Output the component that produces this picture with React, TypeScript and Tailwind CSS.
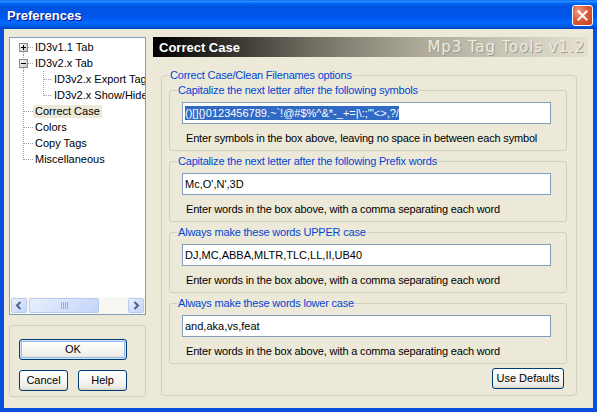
import React from "react";

type Kind = "first" | "exp" | "child" | "childLast" | "mid" | "last";

const dot = {
  stroke: "#A0A0A0",
  strokeDasharray: "1 1",
  shapeRendering: "crispEdges" as const,
};

function Expander({ minus, id }: { minus?: boolean; id: string }) {
  return (
    <>
      <defs>
        <linearGradient id={id} x1="0" y1="0" x2="1" y2="1">
          <stop offset="0" stopColor="#FFFFFF" />
          <stop offset="1" stopColor="#C6C3B3" />
        </linearGradient>
      </defs>
      <rect x={9.5} y={4.5} width={8} height={8} fill={`url(#${id})`} stroke="#7B8C9E" shapeRendering="crispEdges" />
      <line x1={11} y1={8.5} x2={16} y2={8.5} stroke="#000" shapeRendering="crispEdges" />
      {!minus && <line x1={13.5} y1={6} x2={13.5} y2={11} stroke="#000" shapeRendering="crispEdges" />}
    </>
  );
}

function Conn({ kind, id }: { kind: Kind; id: string }) {
  const child = kind === "child" || kind === "childLast";
  const w = child ? 42 : 23;
  return (
    <svg width={w} height={16} className="shrink-0 block">
      {kind === "first" && <line x1={13.5} y1={13} x2={13.5} y2={16} {...dot} />}
      {kind === "exp" && (
        <>
          <line x1={13.5} y1={0} x2={13.5} y2={4} {...dot} />
          <line x1={13.5} y1={13} x2={13.5} y2={16} {...dot} />
        </>
      )}
      {(kind === "mid" || child) && <line x1={13.5} y1={0} x2={13.5} y2={16} {...dot} />}
      {kind === "last" && <line x1={13.5} y1={0} x2={13.5} y2={9} {...dot} />}
      {(kind === "first" || kind === "exp") && <line x1={18} y1={8.5} x2={23} y2={8.5} {...dot} />}
      {(kind === "mid" || kind === "last") && <line x1={14} y1={8.5} x2={23} y2={8.5} {...dot} />}
      {kind === "child" && <line x1={33.5} y1={0} x2={33.5} y2={16} {...dot} />}
      {kind === "childLast" && <line x1={33.5} y1={0} x2={33.5} y2={9} {...dot} />}
      {child && <line x1={34} y1={8.5} x2={42} y2={8.5} {...dot} />}
      {kind === "first" && <Expander id={id} />}
      {kind === "exp" && <Expander id={id} minus />}
    </svg>
  );
}

const rows: { label: string; kind: Kind; sel?: boolean }[] = [
  { label: "ID3v1.1 Tab", kind: "first" },
  { label: "ID3v2.x Tab", kind: "exp" },
  { label: "ID3v2.x Export Tags", kind: "child" },
  { label: "ID3v2.x Show/Hide Frames", kind: "childLast" },
  { label: "Correct Case", kind: "mid", sel: true },
  { label: "Colors", kind: "mid" },
  { label: "Copy Tags", kind: "mid" },
  { label: "Miscellaneous", kind: "last" },
];

function ScrollBtn({ right }: { right?: boolean }) {
  return (
    <div className="w-[16px] h-full rounded-[2px] border border-[#B9CCF6] bg-[linear-gradient(135deg,#E8EFFD_0%,#C4D5FB_100%)] flex items-center justify-center">
      <svg width="8" height="9" viewBox="0 0 8 9">
        {right ? (
          <path d="M2.5 1 L6 4.5 L2.5 8" fill="none" stroke="#4D6185" strokeWidth="2" />
        ) : (
          <path d="M5.5 1 L2 4.5 L5.5 8" fill="none" stroke="#4D6185" strokeWidth="2" />
        )}
      </svg>
    </div>
  );
}

function Tree() {
  return (
    <div className="w-[137px] h-[278px] border border-[#7F9DB9] bg-white flex flex-col">
      <div className="flex-1 overflow-hidden pt-[1px]">
        {rows.map((r, i) => (
          <div key={r.label} className="h-[16px] flex items-center whitespace-nowrap">
            <Conn kind={r.kind} id={`eg${i}`} />
            <span className={`px-[2px] h-[13px] leading-[13px] ${r.sel ? "bg-[#ECE9D8]" : ""}`}>{r.label}</span>
          </div>
        ))}
      </div>
      <div className="h-[17px] bg-[#F7F6F1] flex p-[1px]">
        <ScrollBtn />
        <div className="ml-[2px] w-[70px] h-full rounded-[2px] border border-[#B9CCF6] bg-[linear-gradient(135deg,#E8EFFD_0%,#C4D5FB_100%)] flex items-center justify-center gap-[1px]">
          <span className="w-[1px] h-[7px] bg-[#8EABEF]" />
          <span className="w-[1px] h-[7px] bg-[#8EABEF]" />
          <span className="w-[1px] h-[7px] bg-[#8EABEF]" />
          <span className="w-[1px] h-[7px] bg-[#8EABEF]" />
        </div>
        <div className="flex-1" />
        <ScrollBtn right />
      </div>
    </div>
  );
}

function XPButton({ children, className, def }: { children: React.ReactNode; className: string; def?: boolean }) {
  return (
    <div
      className={`h-[21px] rounded-[3px] border border-[#003C74] bg-[linear-gradient(180deg,#FFFFFF_0%,#F6F5F1_55%,#ECEBE6_85%,#D8D2C6_100%)] flex items-center justify-center text-[11px] ${
        def ? "shadow-[inset_0_0_0_1px_#CEE7FF,inset_0_0_0_2px_#98B8EA]" : ""
      } ${className}`}
    >
      {children}
    </div>
  );
}

function Group({ title, value, help, selected }: { title: string; value: string; help: string; selected?: boolean }) {
  return (
    <fieldset className="border border-[#D0D0BF] rounded-[3px]">
      <legend className="ml-[7px] px-[1px] leading-[13px] tracking-[-0.2px] text-[#0046D5]">{title}</legend>
      <div className="pl-[12px] pt-[5px] pb-[5px]">
        <div className="w-[369px] h-[22px] border border-[#7F9DB9] bg-white flex items-center px-[2px] whitespace-nowrap overflow-hidden">
          {selected ? <span className="bg-[#316AC5] text-white leading-[14px]">{value}</span> : <span>{value}</span>}
        </div>
        <div className="mt-[8px] pl-[4px] leading-[13px] tracking-[-0.17px] whitespace-nowrap">{help}</div>
      </div>
    </fieldset>
  );
}

export default function App() {
  return (
    <div className="w-[597px] h-[412px] flex flex-col bg-[#0B4FDF] overflow-hidden font-['Liberation_Sans',Arial,sans-serif] text-[11px] leading-[13px] text-black">
      <div className="h-[29px] shrink-0 flex items-center justify-between bg-[linear-gradient(180deg,#0058EE_0%,#3593FF_4%,#288EFF_6%,#127DFF_8%,#036FFC_10%,#0262EE_14%,#0057E5_20%,#0054E3_24%,#0055EB_56%,#005BF5_66%,#026AFE_76%,#0062EF_86%,#0052D6_94%,#0046C8_100%)]">
        <span className="pl-[7px] pt-[2px] text-white font-bold text-[13px] [text-shadow:1px_1px_#0F1089]">Preferences</span>
        <div className="mr-[4px] mt-[1px] w-[21px] h-[21px] rounded-[3px] border border-white bg-[radial-gradient(circle_at_30%_30%,#F0A38A_0%,#DC5A36_45%,#C4401C_100%)] flex items-center justify-center">
          <svg width="11" height="11" viewBox="0 0 11 11">
            <path d="M1.5 1.5 L9.5 9.5 M9.5 1.5 L1.5 9.5" stroke="#FFFFFF" strokeWidth="2" strokeLinecap="square" />
          </svg>
        </div>
      </div>
      <div className="flex-1 min-h-0 mx-[4px] mb-[4px] bg-[#ECE9D8] flex">
        <div className="w-[142px] shrink-0 pl-[5px] pt-[8px] flex flex-col">
          <Tree />
          <div className="mt-[10px] w-[137px] h-[72px] border border-[#D0D0BF] rounded-[3px] flex flex-col pt-[13px] pl-[9px]">
            <XPButton className="w-[108px]" def>
              OK
            </XPButton>
            <div className="mt-[10px] flex gap-[10px]">
              <XPButton className="w-[49px]">Cancel</XPButton>
              <XPButton className="w-[49px]">Help</XPButton>
            </div>
          </div>
        </div>
        <div className="flex-1 min-w-0 ml-[7px] mr-[5px] pt-[8px] flex flex-col">
          <div className="h-[20px] flex items-center justify-between bg-[linear-gradient(90deg,#000000_0%,#3B3A34_20%,#757265_38%,#AEAB9C_62%,#E4E1D2_100%)]">
            <span className="pl-[6px] text-white font-bold text-[13px]">Correct Case</span>
            <span className="pr-[3px] font-['DejaVu_Sans',Verdana,sans-serif] text-[15px] leading-[18px] tracking-[0.9px] text-[#EEEBDF] [text-shadow:1px_1px_0_#9C998B]">
              Mp3 Tag Tools v1.2
            </span>
          </div>
          <fieldset className="mt-[12px] ml-[8px] mr-[11px] border border-[#D0D0BF] rounded-[4px]">
            <legend className="ml-[7px] px-[1px] leading-[13px] tracking-[-0.2px] text-[#0046D5]">Correct Case/Clean Filenames options</legend>
            <div className="pl-[7px] pr-[9px] pt-[2px] pb-[6px] flex flex-col gap-[4px]">
              <Group
                title="Capitalize the next letter after the following symbols"
                value={"()[]{}0123456789.~`!@#$%^&*-_+=|\\:;\"'<>,?/"}
                help="Enter symbols in the box above, leaving no space in between each symbol"
                selected
              />
              <Group
                title="Capitalize the next letter after the following Prefix words"
                value="Mc,O',N',3D"
                help="Enter words in the box above, with a comma separating each word"
              />
              <Group
                title="Always make these words UPPER case"
                value="DJ,MC,ABBA,MLTR,TLC,LL,II,UB40"
                help="Enter words in the box above, with a comma separating each word"
              />
              <Group
                title="Always make these words lower case"
                value="and,aka,vs,feat"
                help="Enter words in the box above, with a comma separating each word"
              />
              <div className="flex justify-end pr-[3px]">
                <XPButton className="w-[72px]">Use Defaults</XPButton>
              </div>
            </div>
          </fieldset>
        </div>
      </div>
    </div>
  );
}
